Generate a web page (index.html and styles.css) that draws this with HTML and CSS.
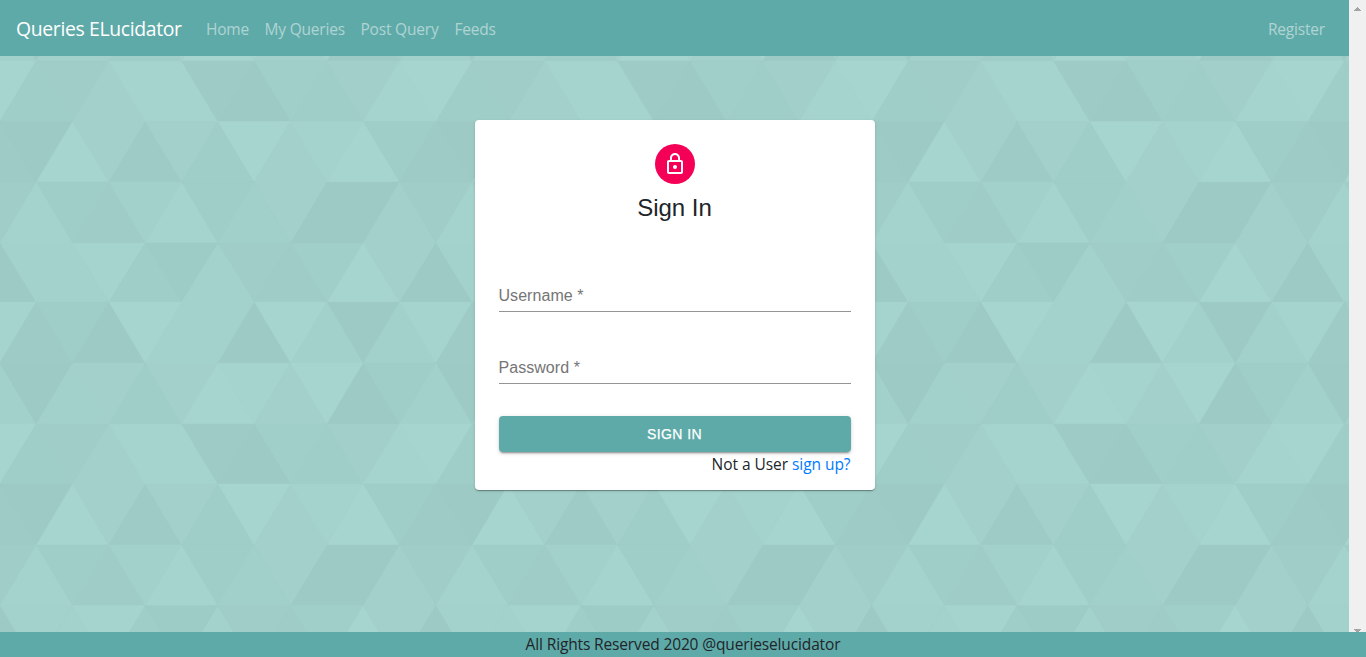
FILE: index.html
```html
<!DOCTYPE html>
<html lang="en">
<head>
<meta charset="utf-8">
<title>Queries ELucidator</title>
<link rel="stylesheet" href="styles.css">
</head>
<body>
<div class="viewport">
  <div class="page">
    <svg class="backdrop" id="backdrop" width="1349" height="632" aria-hidden="true"></svg>
    <nav class="navbar">
      <a class="brand"><span>Queries ELucidator</span></a>
      <div class="links">
        <a class="nav-link home">Home</a>
        <a class="nav-link mine">My Queries</a>
        <a class="nav-link post">Post Query</a>
        <a class="nav-link feeds">Feeds</a>
      </div>
      <a class="nav-link register">Register</a>
    </nav>
    <main class="content">
      <form class="card">
        <div class="avatar">
          <svg width="24" height="24" viewBox="0 0 24 24" fill="#fff"><path d="M12 17c1.1 0 2-.9 2-2s-.9-2-2-2-2 .9-2 2 .9 2 2 2zm6-9h-1V6c0-2.76-2.24-5-5-5S7 3.24 7 6v2H6c-1.1 0-2 .9-2 2v10c0 1.1.9 2 2 2h12c1.1 0 2-.9 2-2V10c0-1.1-.9-2-2-2zM8.900 6c0-1.710 1.390-3.100 3.100-3.100s3.100 1.390 3.100 3.100v2H8.900V6zM18 20H6V10h12v10z"/></svg>
        </div>
        <h1 class="title">Sign In</h1>
        <label class="field">Username *</label>
        <label class="field">Password *</label>
        <button class="submit" type="button">SIGN IN</button>
        <p class="hint">Not a User <a class="signup">sign up?</a></p>
      </form>
    </main>
  </div>
  <div class="scrollbar">
    <svg width="17" height="17"><path d="M8 7h1v1h1v1h1v1h1v1H5v-1h1v-1h1v-1h1z" fill="#a3a3a3"/></svg>
    <svg width="17" height="3"><path d="M5 0h7v1h-1v1h-1v1H7V2H6V1H5z" fill="#a3a3a3"/></svg>
  </div>
</div>
<footer class="footer"><span>All Rights Reserved 2020 @querieselucidator</span></footer>
<script src="backdrop.js"></script>
</body>
</html>
```

FILE: styles.css
```css
* { box-sizing: border-box; }
body {
  margin: 0;
  height: 657px;
  display: flex;
  flex-direction: column;
  overflow: hidden;
  font: 16px/24px "Open Sans", "Noto Sans", sans-serif;
  color: #212529;
}
.viewport { display: flex; height: 632px; }
.page {
  position: relative;
  flex: 1;
  display: flex;
  flex-direction: column;
  background: #a2d0ca;
}
.backdrop { position: absolute; top: 0; left: 0; }
.navbar {
  position: relative;
  display: flex;
  align-items: center;
  height: 56px;
  padding: 2px 16px 0;
  background: #5eaaa8;
  white-space: nowrap;
}
.brand {
  width: 166px;
  margin-right: 16px;
  font-size: 19.4px;
  line-height: 30px;
  letter-spacing: -0.35px;
  color: #fff;
}
.links { display: flex; flex: 1; }
.nav-link {
  padding: 0 8px;
  font-size: 15.5px;
  letter-spacing: -0.2px;
  color: rgba(255, 255, 255, .5);
}
.home { width: 58.5px; }
.mine { width: 96px; }
.post { width: 94px; }
.register { width: 73px; margin-right: 0; }
.content { position: relative; display: flex; justify-content: center; padding-top: 64px; }
.card {
  width: 400px;
  padding: 24px 24px 14px;
  display: flex;
  flex-direction: column;
  background: #fff;
  border-radius: 4px;
  box-shadow: 0 2px 1px -1px rgba(0, 0, 0, .2), 0 1px 1px rgba(0, 0, 0, .14), 0 1px 3px rgba(0, 0, 0, .12);
}
.avatar {
  align-self: center;
  flex: none;
  display: flex;
  align-items: center;
  justify-content: center;
  width: 40px;
  height: 40px;
  border-radius: 50%;
  background: #f50057;
}
.title {
  margin: 8px 0 56px;
  font: 24px/32px "Liberation Sans", Arial, sans-serif;
  text-align: center;
}
.field {
  flex: none;
  height: 32px;
  margin-bottom: 40px;
  padding-top: 6px;
  border-bottom: 1px solid #949494;
  font: 16px/19px "Liberation Sans", Arial, sans-serif;
  letter-spacing: .05px;
  color: #757575;
}
.field + .field { margin-bottom: 32px; }
.submit {
  height: 36px;
  flex: none;
  padding: 0;
  border: 0;
  border-radius: 4px;
  background: #5eaaa8;
  color: #fff;
  font: 14px/24px "Liberation Sans", Arial, sans-serif;
  letter-spacing: .4px;
  -webkit-text-stroke: .25px #fff;
  box-shadow: 0 3px 1px -2px rgba(0, 0, 0, .2), 0 2px 2px rgba(0, 0, 0, .14), 0 1px 5px rgba(0, 0, 0, .12);
}
.hint { margin: 0; font-size: 15.5px; letter-spacing: -.05px; text-align: right; }
.signup { color: #007bff; }
.scrollbar {
  width: 17px;
  display: flex;
  flex-direction: column;
  justify-content: space-between;
  background: #f0f0f0;
}
.footer {
  height: 25px;
  background: #5eaaa8;
  text-align: center;
  font-size: 15.5px;
  line-height: 24px;
  letter-spacing: -.14px;
}
```

FILE: backdrop.js
```javascript
// Each row lists triangle tones from left to right, 0 (dark) to 40 (light).
// Even rows start with an upward triangle, odd rows with a downward one.
const rows = [
  [10, 13, 25, 36, 34, 3, 0, 15, 10, 20, 35, 39],
  [0, 40, 25, 3, 25, 10, 40, 25, 33, 40, 10, 5],
  [33, 10, 9, 24, 36, 10, 19, 25, 0, 0, 25, 13],
  [26, 26, 36, 10, 2, 27, 12, 8, 14, 40, 25, 1],
  [3, 10, 0, 38, 26, 26, 0, 39, 23, 0, 22, 37],
  [0, 22, 25, 10, 25, 39, 37, 25, 40, 0, 10, 24]
];
const W = 436 / 6;
const edges = [0, 61, 121.5, 182, 243, 302, 363, 424, 484, 545, 605.5, 666];
const dark = [157, 202, 196];
const light = [166, 212, 206];
let shapes = "";
for (let r = 0; r < edges.length - 1; r++) {
  const i = (r + 5) % 6;
  const top = edges[r], bottom = edges[r + 1];
  for (let n = -2; n < 40; n++) {
    const tone = rows[i][(n + 12) % 12] / 40;
    const color = dark.map((d, c) => Math.round(d + (light[c] - d) * tone));
    const x = n * W / 2;
    const up = (i + n) % 2 === 0;
    const points = up
      ? `${x},${bottom} ${x + W},${bottom} ${x + W / 2},${top}`
      : `${x},${top} ${x + W},${top} ${x + W / 2},${bottom}`;
    shapes += `<polygon points="${points}" fill="rgb(${color})" stroke="rgb(${color})" stroke-width=".4"/>`;
  }
}
document.getElementById("backdrop").innerHTML = shapes;
```
